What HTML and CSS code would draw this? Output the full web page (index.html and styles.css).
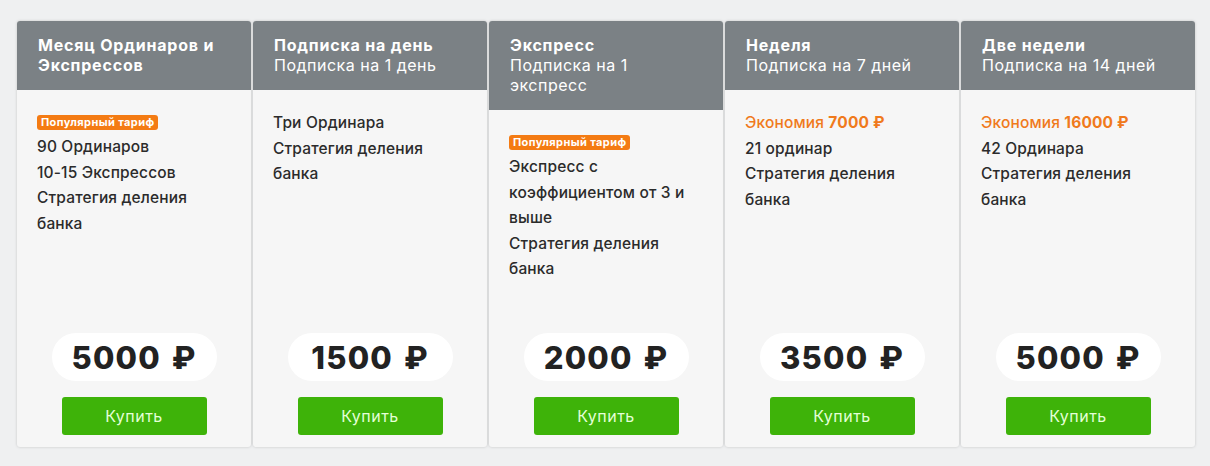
FILE: index.html
```html
<!DOCTYPE html>
<html lang="ru">
<head>
<meta charset="utf-8">
<title>Тарифы</title>
<link rel="stylesheet" href="styles.css">
</head>
<body>
<div class="plans">
  <div class="card">
    <div class="head">
      <div class="title">Месяц Ординаров и Экспрессов</div>
    </div>
    <div class="body">
      <ul class="features">
        <li class="badge-row"><span class="badge">Популярный тариф</span></li>
        <li>90 Ординаров</li>
        <li>10-15 Экспрессов</li>
        <li>Стратегия деления банка</li>
      </ul>
      <div class="foot">
        <div class="price">5000 ₽</div>
        <button class="buy">Купить</button>
      </div>
    </div>
  </div>
  <div class="card">
    <div class="head">
      <div class="title">Подписка на день</div>
      <div class="sub">Подписка на 1 день</div>
    </div>
    <div class="body">
      <ul class="features">
        <li>Три Ординара</li>
        <li>Стратегия деления банка</li>
      </ul>
      <div class="foot">
        <div class="price">1500 ₽</div>
        <button class="buy">Купить</button>
      </div>
    </div>
  </div>
  <div class="card">
    <div class="head">
      <div class="title">Экспресс</div>
      <div class="sub">Подписка на 1 экспресс</div>
    </div>
    <div class="body">
      <ul class="features">
        <li class="badge-row"><span class="badge">Популярный тариф</span></li>
        <li>Экспресс с коэффициентом от 3 и выше</li>
        <li>Стратегия деления банка</li>
      </ul>
      <div class="foot">
        <div class="price">2000 ₽</div>
        <button class="buy">Купить</button>
      </div>
    </div>
  </div>
  <div class="card">
    <div class="head">
      <div class="title">Неделя</div>
      <div class="sub">Подписка на 7 дней</div>
    </div>
    <div class="body">
      <ul class="features">
        <li class="save">Экономия <b>7000 ₽</b></li>
        <li>21 ординар</li>
        <li>Стратегия деления банка</li>
      </ul>
      <div class="foot">
        <div class="price">3500 ₽</div>
        <button class="buy">Купить</button>
      </div>
    </div>
  </div>
  <div class="card">
    <div class="head">
      <div class="title">Две недели</div>
      <div class="sub">Подписка на 14 дней</div>
    </div>
    <div class="body">
      <ul class="features">
        <li class="save">Экономия <b>16000 ₽</b></li>
        <li>42 Ординара</li>
        <li>Стратегия деления банка</li>
      </ul>
      <div class="foot">
        <div class="price">5000 ₽</div>
        <button class="buy">Купить</button>
      </div>
    </div>
  </div>
</div>
</body>
</html>
```

FILE: styles.css
```css
* { box-sizing: border-box; }
html, body { margin: 0; padding: 0; }
body {
  background: #eff0f1;
  font-family: "Inter", "Noto Sans", "DejaVu Sans", sans-serif;
  color: #2b2b2b;
}
.plans {
  display: flex;
  gap: 2px;
  padding: 21px 15px 19px 17px;
}
.card {
  width: 234px;
  height: 426px;
  display: flex;
  flex-direction: column;
  background: #f6f6f6;
  border-radius: 3px;
  box-shadow: 0 0 3px rgba(0,0,0,0.18);
  overflow: hidden;
}
.head {
  background: #7b8185;
  color: #fff;
  padding: 14px 24px 15px 21px;
  font-size: 16px;
  line-height: 20px;
}
.title { font-weight: 700; letter-spacing: 0.8px; }
.sub { font-weight: 400; letter-spacing: 0.5px; }
.body {
  flex: 1;
  display: flex;
  flex-direction: column;
  padding: 20px 22px 12px 20px;
}
.features {
  list-style: none;
  margin: 0;
  padding: 0;
  font-size: 15.5px;
  line-height: 25.5px;
  font-weight: 500;
  letter-spacing: 0.15px;
}
.badge-row { line-height: 24px; height: 24px; }
.badge {
  display: inline-block;
  background: #f47b13;
  color: #fff;
  font-size: 11px;
  font-weight: 700;
  line-height: 15px;
  padding: 0 4px;
  letter-spacing: 0.4px;
  border-radius: 3px;
  vertical-align: middle;
}
.save { color: #f07a1c; }
.save b { font-weight: 700; }
.foot {
  margin-top: auto;
  display: flex;
  flex-direction: column;
  align-items: center;
  gap: 16px;
  margin-right: -2px;
}
.price {
  width: 165px;
  height: 48px;
  background: #fff;
  border-radius: 24px;
  display: flex;
  align-items: center;
  justify-content: center;
  font-size: 31px;
  font-weight: 800;
  letter-spacing: 1.2px;
  word-spacing: 3px;
  color: #222;
}
.buy {
  width: 145px;
  height: 38px;
  border: 0;
  border-radius: 3px;
  background: #3eb309;
  color: #e4ffd6;
  font-family: inherit;
  font-size: 16px;
  font-weight: 400;
  letter-spacing: 0.5px;
}
```
